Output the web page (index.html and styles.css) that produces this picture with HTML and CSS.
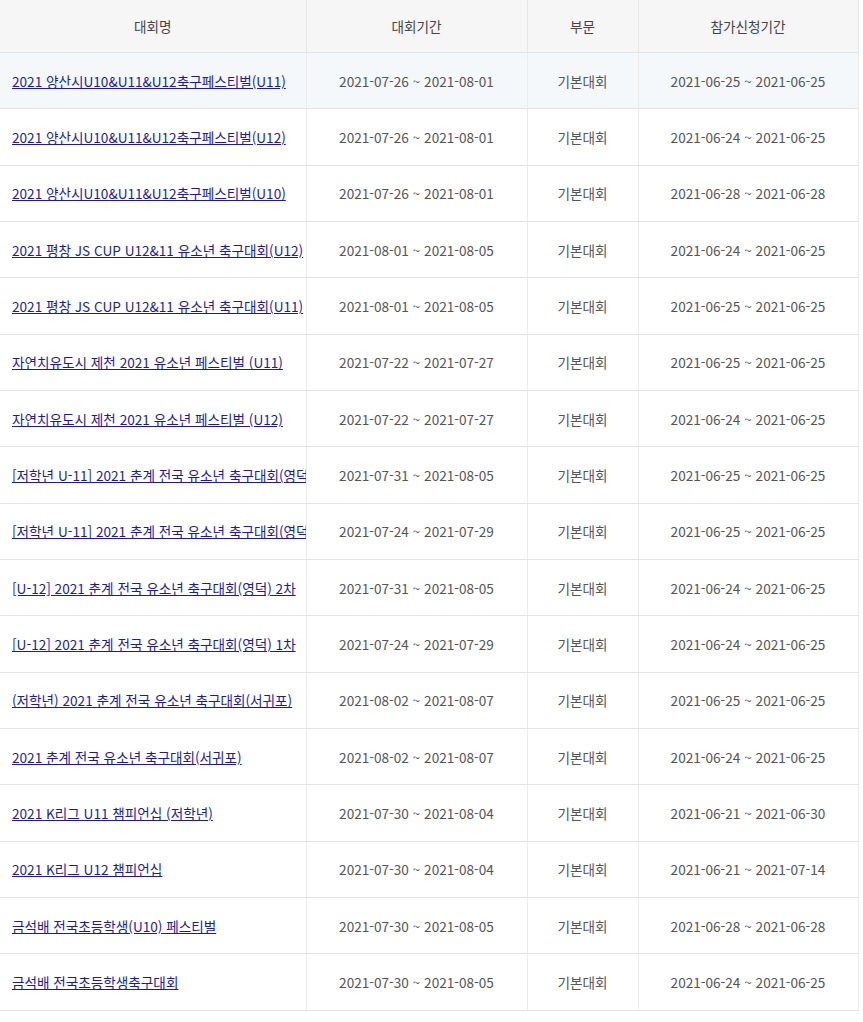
FILE: index.html
```html
<!DOCTYPE html>
<html lang="ko">

<head>
	<meta charset="UTF-8" />
	<meta name="viewport" content="width=device-width, initial-scale=1.0" />
	<title>대회목록</title>
	<link rel="stylesheet" href="styles.css">
</head>

<body>
	<div class="list-wrap">
		<table class="match-list">
			<colgroup>
				<col class="col-name">
				<col class="col-period">
				<col class="col-type">
				<col class="col-apply">
			</colgroup>
			<thead>
				<tr>
					<th>대회명</th>
					<th>대회기간</th>
					<th>부문</th>
					<th>참가신청기간</th>
				</tr>
			</thead>
			<tbody>
				<tr class="hover">
					<td class="name"><a href="#">2021 양산시U10&amp;U11&amp;U12축구페스티벌(U11)</a></td>
					<td>2021-07-26 ~ 2021-08-01</td>
					<td>기본대회</td>
					<td>2021-06-25 ~ 2021-06-25</td>
				</tr>
				<tr>
					<td class="name"><a href="#">2021 양산시U10&amp;U11&amp;U12축구페스티벌(U12)</a></td>
					<td>2021-07-26 ~ 2021-08-01</td>
					<td>기본대회</td>
					<td>2021-06-24 ~ 2021-06-25</td>
				</tr>
				<tr>
					<td class="name"><a href="#">2021 양산시U10&amp;U11&amp;U12축구페스티벌(U10)</a></td>
					<td>2021-07-26 ~ 2021-08-01</td>
					<td>기본대회</td>
					<td>2021-06-28 ~ 2021-06-28</td>
				</tr>
				<tr>
					<td class="name"><a href="#">2021 평창 JS CUP U12&amp;11 유소년 축구대회(U12)</a></td>
					<td>2021-08-01 ~ 2021-08-05</td>
					<td>기본대회</td>
					<td>2021-06-24 ~ 2021-06-25</td>
				</tr>
				<tr>
					<td class="name"><a href="#">2021 평창 JS CUP U12&amp;11 유소년 축구대회(U11)</a></td>
					<td>2021-08-01 ~ 2021-08-05</td>
					<td>기본대회</td>
					<td>2021-06-25 ~ 2021-06-25</td>
				</tr>
				<tr>
					<td class="name"><a href="#">자연치유도시 제천 2021 유소년 페스티벌 (U11)</a></td>
					<td>2021-07-22 ~ 2021-07-27</td>
					<td>기본대회</td>
					<td>2021-06-25 ~ 2021-06-25</td>
				</tr>
				<tr>
					<td class="name"><a href="#">자연치유도시 제천 2021 유소년 페스티벌 (U12)</a></td>
					<td>2021-07-22 ~ 2021-07-27</td>
					<td>기본대회</td>
					<td>2021-06-24 ~ 2021-06-25</td>
				</tr>
				<tr>
					<td class="name"><a href="#">[저학년 U-11] 2021 춘계 전국 유소년 축구대회(영덕) 2차</a></td>
					<td>2021-07-31 ~ 2021-08-05</td>
					<td>기본대회</td>
					<td>2021-06-25 ~ 2021-06-25</td>
				</tr>
				<tr>
					<td class="name"><a href="#">[저학년 U-11] 2021 춘계 전국 유소년 축구대회(영덕) 1차</a></td>
					<td>2021-07-24 ~ 2021-07-29</td>
					<td>기본대회</td>
					<td>2021-06-25 ~ 2021-06-25</td>
				</tr>
				<tr>
					<td class="name"><a href="#">[U-12] 2021 춘계 전국 유소년 축구대회(영덕) 2차</a></td>
					<td>2021-07-31 ~ 2021-08-05</td>
					<td>기본대회</td>
					<td>2021-06-24 ~ 2021-06-25</td>
				</tr>
				<tr>
					<td class="name"><a href="#">[U-12] 2021 춘계 전국 유소년 축구대회(영덕) 1차</a></td>
					<td>2021-07-24 ~ 2021-07-29</td>
					<td>기본대회</td>
					<td>2021-06-24 ~ 2021-06-25</td>
				</tr>
				<tr>
					<td class="name"><a href="#">(저학년) 2021 춘계 전국 유소년 축구대회(서귀포)</a></td>
					<td>2021-08-02 ~ 2021-08-07</td>
					<td>기본대회</td>
					<td>2021-06-25 ~ 2021-06-25</td>
				</tr>
				<tr>
					<td class="name"><a href="#">2021 춘계 전국 유소년 축구대회(서귀포)</a></td>
					<td>2021-08-02 ~ 2021-08-07</td>
					<td>기본대회</td>
					<td>2021-06-24 ~ 2021-06-25</td>
				</tr>
				<tr>
					<td class="name"><a href="#">2021 K리그 U11 챔피언십 (저학년)</a></td>
					<td>2021-07-30 ~ 2021-08-04</td>
					<td>기본대회</td>
					<td>2021-06-21 ~ 2021-06-30</td>
				</tr>
				<tr>
					<td class="name"><a href="#">2021 K리그 U12 챔피언십</a></td>
					<td>2021-07-30 ~ 2021-08-04</td>
					<td>기본대회</td>
					<td>2021-06-21 ~ 2021-07-14</td>
				</tr>
				<tr>
					<td class="name"><a href="#">금석배 전국초등학생(U10) 페스티벌</a></td>
					<td>2021-07-30 ~ 2021-08-05</td>
					<td>기본대회</td>
					<td>2021-06-28 ~ 2021-06-28</td>
				</tr>
				<tr>
					<td class="name"><a href="#">금석배 전국초등학생축구대회</a></td>
					<td>2021-07-30 ~ 2021-08-05</td>
					<td>기본대회</td>
					<td>2021-06-24 ~ 2021-06-25</td>
				</tr>
			</tbody>
		</table>
	</div>
</body>

</html>
```

FILE: styles.css
```css
body, html {
	margin: 0;
	background-color: #fff;
	font-family: 'Noto Sans CJK KR', 'Noto Sans', sans-serif;
}
.list-wrap {
	width: 858px;
}
.match-list {
	width: 100%;
	table-layout: fixed;
	border-collapse: collapse;
	font-size: 13.6px;
	color: #555;
}
.col-name {
	width: 306px;
}
.col-period {
	width: 221px;
}
.col-type {
	width: 111px;
}
.col-apply {
	width: 220px;
}
.match-list th {
	height: 52px;
	padding: 0;
	background-color: #f6f6f6;
	font-weight: normal;
	color: #444;
	text-align: center;
	border-right: 1px solid #e7e7e7;
	border-bottom: 1px solid #e4e4e4;
}
.match-list td {
	height: 55.33px;
	padding: 0;
	text-align: center;
	white-space: nowrap;
	border-right: 1px solid #ececec;
	border-bottom: 1px solid #e4e4e4;
}
.match-list tr.hover td {
	background-color: #f4f8fb;
}
.match-list td.name {
	text-align: left;
	padding-left: 12px;
	overflow: hidden;
}
.match-list td.name a {
	color: #1c1c96;
	text-decoration: underline;
}
```
